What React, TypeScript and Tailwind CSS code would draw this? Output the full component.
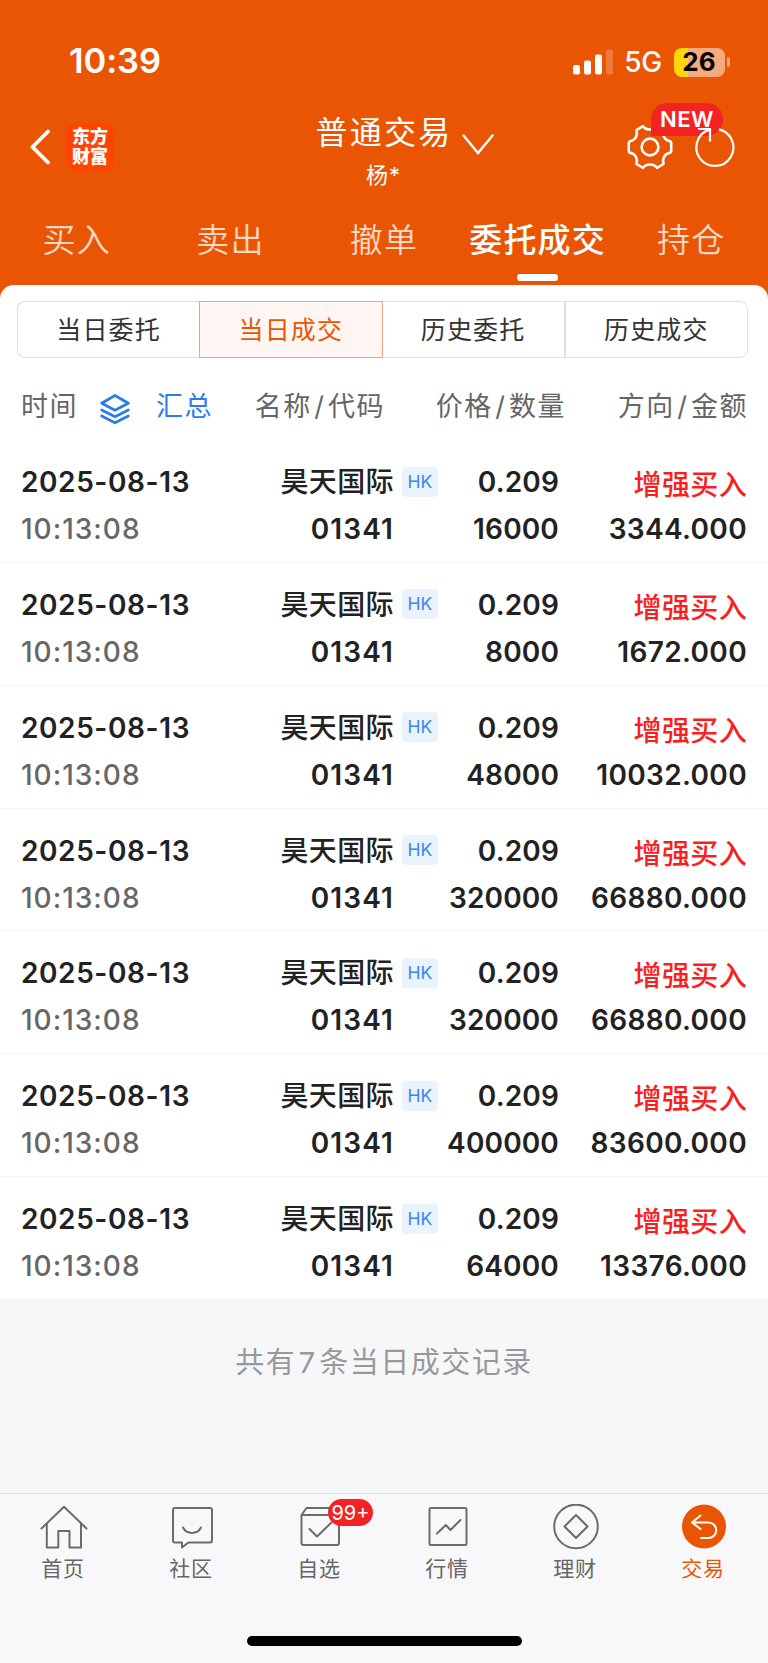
import React from 'react';
import clsx from 'clsx';

interface Trade {
  date: string;
  time: string;
  name: string;
  code: string;
  price: string;
  volume: string;
  side: string;
  amount: string;
}

const volumes = [
  ['16000', '3344.000'],
  ['8000', '1672.000'],
  ['48000', '10032.000'],
  ['320000', '66880.000'],
  ['320000', '66880.000'],
  ['400000', '83600.000'],
  ['64000', '13376.000'],
];

const trades: Trade[] = volumes.map(([volume, amount]) => ({
  date: '2025-08-13',
  time: '10:13:08',
  name: '昊天国际',
  code: '01341',
  price: '0.209',
  volume,
  side: '增强买入',
  amount,
}));

const tabs = ['买入', '卖出', '撤单', '委托成交', '持仓'];
const filters = ['当日委托', '当日成交', '历史委托', '历史成交'];

function StatusBar() {
  return (
    <div className="flex h-[110px] items-start justify-between pt-[43px] pr-[38px] pl-[69px] text-white">
      <span className="text-[34.5px] leading-9 font-semibold tracking-[-0.1px]">10:39</span>
      <div className="flex items-center pt-px">
        <svg className="h-[26px] w-10" viewBox="0 0 40 26" fill="currentColor">
          <rect x="0" y="16" width="7" height="9.5" rx="2" />
          <rect x="11" y="11.5" width="7" height="14" rx="2" />
          <rect x="22" y="5.5" width="7" height="20" rx="2" />
          <rect x="33" y="0.5" width="7" height="25" rx="2" opacity="0.22" />
        </svg>
        <span className="ml-[11px] text-[28px] leading-9 font-medium tracking-[-0.3px]">5G</span>
        <div className="ml-3 flex h-[29px] w-[51px] items-center justify-center rounded-[8px] bg-[linear-gradient(to_right,#ffd60a_14px,#f6ab7f_14px)] pr-px text-[26px] leading-7 font-bold text-black">
          26
        </div>
        <span className="ml-0.5 h-2.5 w-[3px] rounded-r-full bg-[#f6ab7f]" />
      </div>
    </div>
  );
}

function GearIcon() {
  return (
    <svg className="h-[46px] w-[46px]" viewBox="0 0 46 46" fill="none" stroke="currentColor" strokeWidth="2.6" strokeLinejoin="round">
      <path d="M16 2.200 C19 6.600 27 6.600 30 2.200 L36.500 6 C35 12 38 16.500 43.200 17.200 L44.200 19 V27 L43.200 28.800 C38 29.500 35 34 36.500 40 L30 43.800 C27 39.400 19 39.400 16 43.800 L9.500 40 C11 34 8 29.500 2.800 28.800 L1.800 27 V19 L2.800 17.200 C8 16.500 11 12 9.500 6 Z" />
      <circle cx="23" cy="23" r="8.400" />
    </svg>
  );
}

function Header() {
  return (
    <div className="flex h-[100px] items-start justify-between pr-[33px] pl-[29px] text-white">
      <div className="flex w-[220px] items-center gap-[15px] pt-[13px]">
        <svg className="h-9 w-[22px]" viewBox="0 0 22 36" fill="none" stroke="currentColor" strokeWidth="3.8" strokeLinecap="round" strokeLinejoin="round">
          <path d="M19 2.5 3.5 18 19 33.5" />
        </svg>
        <div className="flex h-12 w-12 flex-col items-center justify-center rounded-[9px] bg-[#ff4400] text-[18px] leading-5 font-black">
          <span>东方</span>
          <span>财富</span>
        </div>
      </div>
      <div className="flex flex-col items-center">
        <div className="flex items-center gap-[10px] pl-[46px]">
          <h1 className="text-[32px] leading-[44px] tracking-[2.2px]">普通交易</h1>
          <svg className="mt-6 h-[22px] w-8" viewBox="0 0 32 22" fill="none" stroke="currentColor" strokeWidth="2.4" strokeLinecap="round">
            <path d="M1.5 1.5 16 19 30.5 1.5" />
          </svg>
        </div>
        <p className="pl-[3px] text-[22px] leading-[38px] tracking-[1px]">杨*</p>
      </div>
      <div className="relative flex w-[220px] items-center justify-end gap-[22px] pt-[14px]">
        <GearIcon />
        <span className="absolute top-[-7px] right-3 flex h-[33px] w-[72px] items-center justify-center rounded-[16px] rounded-bl-none bg-[#f32323] text-[22px] font-semibold tracking-[0.5px]">
          NEW
        </span>
        <svg className="relative h-[46px] w-10" viewBox="0 0 40 46" fill="none" stroke="currentColor" strokeWidth="2.2">
          <path d="M24 5.400 A18.500 18.500 0 1 1 14 5.900" />
          <path d="M3 5H15V17.500" />
        </svg>
      </div>
    </div>
  );
}

function TopTabs() {
  return (
    <div className="grid h-[75px] grid-cols-5">
      {tabs.map((tab) => {
        const active = tab === '委托成交';
        return (
          <div key={tab} className="flex flex-col items-center">
            <span
              className={clsx(
                'pt-[7px] text-[33px] leading-[46px] tracking-[1.2px] whitespace-nowrap',
                active ? 'font-medium text-white' : 'font-[350] text-[#fbd9c4]'
              )}
            >
              {tab}
            </span>
            {active && <span className="mt-[11px] h-[7px] w-[41px] rounded-[3px] bg-white" />}
          </div>
        );
      })}
    </div>
  );
}

function FilterBar() {
  return (
    <div className="mr-5 mb-px ml-[17px] flex h-[57px]">
      {filters.map((label, i) => (
        <div
          key={label}
          className={clsx(
            'flex flex-1 items-center justify-center border-[1.5px] pt-[3px] text-[25px] tracking-[1.2px]',
            i === 0 && 'rounded-l-[8px] border-r-0',
            i === 2 && 'border-l-0',
            i === 3 && 'rounded-r-[8px]',
            i === 1 ? 'border-[#f0a27c] bg-[#fff5f2] text-[#ea5504]' : 'border-[#dcdfe6] text-[#333]'
          )}
        >
          {label}
        </div>
      ))}
    </div>
  );
}

function Slashed({ left, right }: { left: string; right: string }) {
  return (
    <>
      {left}
      <span className="mx-[2.5px]">/</span>
      {right}
    </>
  );
}

function ColumnHeads() {
  return (
    <div className="flex h-[81px] items-center pt-[15px] pr-5 pl-[21px] text-[27px] tracking-[1.5px] text-[#666]">
      <span className="w-[78px]">时间</span>
      <svg className="mt-[3px] h-8 w-8" viewBox="0 0 32 32" fill="none" stroke="#2b7de9" strokeWidth="2.8" strokeLinejoin="round" strokeLinecap="round">
        <path d="M16 2.500 29.300 10.200 16 17.200 2.700 10.200Z" />
        <path d="M2.700 17 16 23.800 29.300 17" />
        <path d="M2.700 23 16 29.800 29.300 23" />
      </svg>
      <span className="ml-[25px] text-[#2b7de9]">汇总</span>
      <span className="flex-1 text-right">
        <Slashed left="名称" right="代码" />
      </span>
      <span className="w-[181px] text-right">
        <Slashed left="价格" right="数量" />
      </span>
      <span className="w-[182px] text-right">
        <Slashed left="方向" right="金额" />
      </span>
    </div>
  );
}

function TradeRow({ trade }: { trade: Trade }) {
  return (
    <div className="flex h-[122.86px] border-b-[1.5px] border-[#f5f5f7] pt-[19px] pr-[21px] pl-[21px] text-[28px] leading-[47px] font-semibold text-[#222]">
      <div className="w-[200px]">
        <div className="tracking-[0.6px]">{trade.date}</div>
        <div className="font-medium tracking-[1px] text-[#666]">{trade.time}</div>
      </div>
      <div className="w-[173px] text-right">
        <div className="font-medium tracking-[0.4px] whitespace-nowrap">{trade.name}</div>
        <div className="tracking-[1.1px]">{trade.code}</div>
      </div>
      <div className="ml-2 flex h-[45px] items-center">
        <span className="flex h-[30px] w-9 items-center justify-center rounded-[4px] bg-[#e9f2fd] text-[17.5px] leading-5 font-normal text-[#3b86ee]">
          HK
        </span>
      </div>
      <div className="flex-1 text-right tracking-[0.15px]">
        <div>{trade.price}</div>
        <div>{trade.volume}</div>
      </div>
      <div className="w-[188px] text-right tracking-[0.35px]">
        <div className="h-[47px] pt-[3px] font-medium text-[#fa1e1e]">{trade.side}</div>
        <div>{trade.amount}</div>
      </div>
    </div>
  );
}

const navItems = [
  {
    label: '首页',
    icon: (
      <>
        <path d="M1.500 24.500 24 2.800 46.500 24.500" />
        <path d="M6.800 19.800V43.500H18.300V27H29.500V43.500H41V19.800" />
      </>
    ),
  },
  {
    label: '社区',
    icon: (
      <>
        <path d="M7 4H42A2 2 0 0 1 44 6V36.500A2 2 0 0 1 42 38.500H20.500L14 43.500V38.500H7A2 2 0 0 1 5 36.500V6A2 2 0 0 1 7 4" />
        <path d="M15 23.500C18.500 30.700 29.500 30.700 33 23.500" />
      </>
    ),
  },
  {
    label: '自选',
    badge: '99+',
    icon: (
      <>
        <path d="M5.500 11 10.500 4H40L43 11M5.500 11H43V39A2 2 0 0 1 41 41H7.500A2 2 0 0 1 5.500 39Z" />
        <path d="M13.500 25 21 32.500 35.500 18.500" />
      </>
    ),
  },
  {
    label: '行情',
    icon: (
      <>
        <rect x="5.500" y="4" width="37" height="37" rx="1.500" />
        <path d="M13 29.500 21.800 21 26.500 26 36.500 16" />
      </>
    ),
  },
  {
    label: '理财',
    icon: (
      <>
        <circle cx="24" cy="22.500" r="21.800" />
        <path d="M24 11 35.500 22.500 24 34 12.500 22.500Z" />
      </>
    ),
  },
  {
    label: '交易',
    active: true,
    icon: (
      <>
        <circle cx="24" cy="22.500" r="22" fill="#ea5504" stroke="none" />
        <g stroke="#fff">
          <path d="M20.500 11.500 12 18.500 20.500 25" />
          <path d="M12 18.500H28.500A7.700 7.700 0 0 1 28.500 34H21" />
        </g>
      </>
    ),
  },
];

function BottomNav() {
  return (
    <div className="flex h-[170px] flex-col items-center justify-between border-t-[1.5px] border-[#e3e4e8] bg-[#f8f8fb] pb-[17px]">
      <div className="grid w-full grid-cols-6 pt-[10px]">
        {navItems.map((item) => (
          <div key={item.label} className="relative flex flex-col items-center">
            <svg className="h-12 w-12" viewBox="0 0 48 48" fill="none" stroke="#6b6b6b" strokeWidth="2" strokeLinejoin="round" strokeLinecap="round">
              {item.icon}
            </svg>
            <span
              className={clsx('mt-[3px] pr-0.5 text-[21px] leading-7 tracking-[0.8px]', item.active ? 'text-[#ea5504]' : 'text-[#666]')}
            >
              {item.label}
            </span>
            {item.badge && (
              <span className="absolute top-[-5px] left-[72px] flex h-[27px] w-[45px] items-center justify-center rounded-full bg-[#f32323] text-[20px] text-white">
                {item.badge}
              </span>
            )}
          </div>
        ))}
      </div>
      <div className="h-2.5 w-[275px] rounded-full bg-black" />
    </div>
  );
}

export default function App() {
  return (
    <div className="flex h-[1663px] w-[768px] flex-col overflow-hidden bg-[#f6f7f9] font-['Inter','Noto_Sans_CJK_SC',sans-serif]">
      <div className="bg-[#ea5504]">
        <StatusBar />
        <Header />
        <TopTabs />
        <div className="rounded-t-[14px] bg-white pt-4">
          <FilterBar />
          <ColumnHeads />
        </div>
      </div>
      <div className="bg-white">
        {trades.map((trade, i) => (
          <TradeRow key={i} trade={trade} />
        ))}
      </div>
      <div className="flex-1 pt-[40px] text-center text-[29px] leading-[46px] tracking-[1.5px] text-[#999]">
        共有<span className="mx-[2.5px]">{trades.length}</span>条当日成交记录
      </div>
      <BottomNav />
    </div>
  );
}
